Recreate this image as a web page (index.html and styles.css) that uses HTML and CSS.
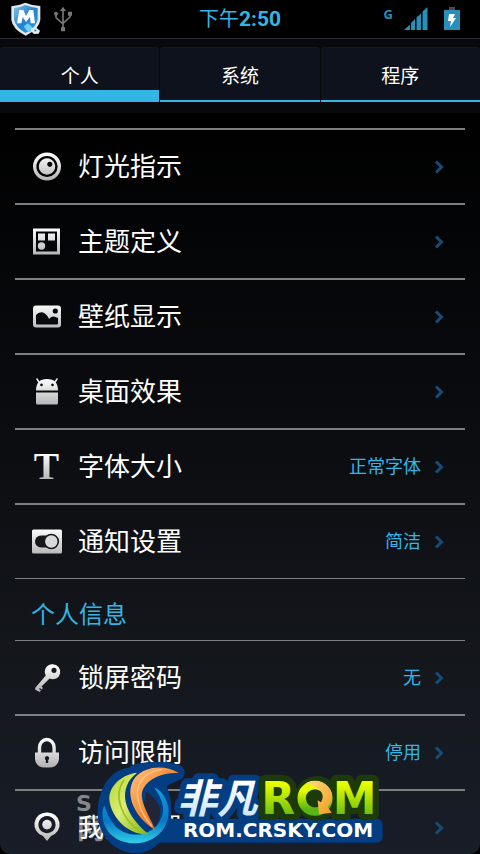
FILE: index.html
```html
<!DOCTYPE html>
<html lang="zh-CN">
<head>
<meta charset="utf-8">
<meta name="viewport" content="width=device-width, initial-scale=1">
<title>设置</title>
<link rel="stylesheet" href="styles.css">
</head>
<body>
<svg class="defs" width="0" height="0" aria-hidden="true">
  <defs>
    <linearGradient id="silver" gradientUnits="userSpaceOnUse" x1="0" y1="2" x2="0" y2="30">
      <stop offset="0" stop-color="#fff"/><stop offset="1" stop-color="#b2b2b4"/>
    </linearGradient>
    <symbol id="chevron" viewBox="0 0 10 14"><path d="M2 1.500L7.500 7L2 12.500" fill="none" stroke="#174c78" stroke-width="3"/></symbol>
  </defs>
</svg>
<div class="app">
  <header class="status">
    <div class="status-side">
      <svg width="30" height="34" viewBox="0 0 90 102">
        <defs><linearGradient id="shield" x1="0" y1="0" x2="1" y2="1"><stop offset="0" stop-color="#7cc4ee"/><stop offset=".5" stop-color="#2382cf"/><stop offset="1" stop-color="#2e9be0"/></linearGradient></defs>
        <path d="M1 13Q25 10 43 2Q64 11 88 12V54Q84 82 44 101Q5 82 1 54Z" fill="#e4e8ec"/>
        <path d="M9 18Q27 16 43 9Q62 16 80 18V53Q76 75 44 93Q13 75 9 53Z" fill="url(#shield)"/>
        <path d="M18 64L25 24H37L45 42L55 24H67L72 64H59L57 45L45 60L35 45L31 64Z" fill="#fff"/>
        <path d="M39 72L51 64L67 79L58 91Q44 88 39 72Z" fill="#72d0f5"/>
        <path d="M61 78L76 77L87 86L83 95L69 96L60 88Z" fill="#d8eef8"/>
        <path d="M70 83h6v5h-6z" fill="#4c7890"/>
      </svg>
      <svg width="18" height="26" viewBox="0 0 54 78">
        <g fill="none" stroke="#777" stroke-width="5"><path d="M27 8V66M6 25V35L27 54M48 25V33L27 52"/></g>
        <g fill="#777"><path d="M18 15L27 2L36 15Z"/><circle cx="6" cy="23" r="6"/><path d="M42 17h12v12h-12zM21 64h12v12h-12z"/></g>
      </svg>
    </div>
    <time class="clock" datetime="14:50">下午<b>2:50</b></time>
    <div class="status-side status-right">
      <span class="net">G</span>
      <svg width="24" height="24" viewBox="0 0 24 24"><path d="M0 23L6 17.500V23ZM7 16L11 12V23H7ZM12.500 10.500L17 6.500V23H12.500ZM18.500 4.500L23.500 0V23H18.500Z" fill="#288fb8"/></svg>
      <svg width="16" height="24" viewBox="0 0 16 24"><path d="M5 0h6v3h-6z" fill="#4a4a4a"/><path d="M0 3h16v20H0z" fill="#288fb8"/><path d="M5 7h6l-2 4h3l-6 9 1-6H4z" fill="#fff"/></svg>
    </div>
  </header>

  <nav class="tabs">
    <button class="tab tab-active" type="button">个人</button>
    <button class="tab" type="button">系统</button>
    <button class="tab" type="button">程序</button>
  </nav>

  <main class="panel">
    <div class="content">
      <ul class="list">
        <li><a class="row" href="#light">
          <svg class="icon" viewBox="0 0 32 32"><circle cx="16" cy="15.500" r="12.300" fill="none" stroke="url(#silver)" stroke-width="3.400"/><path fill="url(#silver)" fill-rule="evenodd" d="M16 7.300a8.200 8.200 0 1 0 .01 0ZM18.800 10.700a2.600 2.600 0 1 1-.01 0Z"/></svg>
          <span class="label">灯光指示</span><svg class="chev"><use href="#chevron"/></svg></a></li>
        <li><a class="row" href="#theme">
          <svg class="icon" viewBox="0 0 32 32"><path fill="url(#silver)" fill-rule="evenodd" d="M2 2.500H29V28.500H2ZM5 5.500V25.500H26V5.500Z"/><path fill="url(#silver)" d="M7 7.500h7v7H7zM17 7.500h7v7h-7z"/><circle cx="10.500" cy="20" r="3.700" fill="url(#silver)"/></svg>
          <span class="label">主题定义</span><svg class="chev"><use href="#chevron"/></svg></a></li>
        <li><a class="row" href="#wallpaper">
          <svg class="icon" viewBox="0 0 32 32"><rect x="2" y="4.500" width="28" height="22" rx="3" fill="url(#silver)"/><path fill="#08090d" d="M5 14Q8 10.500 12 11.500Q16 13 18 18Q20 15 23 15.500L27 17V22.500Q27 23.500 26 23.500H6Q5 23.500 5 22.500Z"/><circle cx="24.300" cy="10" r="2.600" fill="#08090d"/></svg>
          <span class="label">壁纸显示</span><svg class="chev"><use href="#chevron"/></svg></a></li>
        <li><a class="row" href="#desktop">
          <svg class="icon" viewBox="0 0 32 32"><path d="M8.500 7L6 3M23.500 7L26 3" stroke="#eee" stroke-width="1.500" stroke-linecap="round"/><path fill="url(#silver)" fill-rule="evenodd" d="M5 14.500Q5 3 16 3T27 14.500ZM10.500 7.500a1.400 1.400 0 1 0 .01 0ZM21.500 7.500a1.400 1.400 0 1 0 .01 0Z"/><path fill="url(#silver)" d="M5 16.500H27V27Q27 28.500 25.500 28.500H6.500Q5 28.500 5 27Z"/></svg>
          <span class="label">桌面效果</span><svg class="chev"><use href="#chevron"/></svg></a></li>
        <li><a class="row" href="#font">
          <svg class="icon" viewBox="0 0 32 32"><text class="type-t" x="15.500" y="28" text-anchor="middle" fill="url(#silver)">T</text></svg>
          <span class="label">字体大小</span><span class="value">正常字体</span><svg class="chev"><use href="#chevron"/></svg></a></li>
        <li><a class="row" href="#notify">
          <svg class="icon" viewBox="0 0 32 32"><rect x="1" y="3.500" width="30" height="24" rx="1.500" fill="url(#silver)"/><rect x="4" y="9.500" width="20" height="12" rx="6" fill="#16181c"/><circle cx="20.300" cy="15.500" r="7" fill="#d9d9da" stroke="#16181c" stroke-width="1.600"/></svg>
          <span class="label">通知设置</span><span class="value">简洁</span><svg class="chev"><use href="#chevron"/></svg></a></li>
      </ul>
      <h2 class="section">个人信息</h2>
      <ul class="list list-info">
        <li><a class="row" href="#lock">
          <svg class="icon" viewBox="0 0 32 32"><path fill="url(#silver)" fill-rule="evenodd" d="M21.700 2.300a7.500 7.500 0 1 1-3.100 14.300L10.500 24.500L12 26L10.500 27.500L9 26L8 27L10 28.500L8.500 30L4 27.500L4.500 25.500L14.800 13.500A7.500 7.500 0 0 1 21.700 2.300ZM23 5.800a2.600 2.600 0 1 0 .01 0Z"/></svg>
          <span class="label">锁屏密码</span><span class="value">无</span><svg class="chev"><use href="#chevron"/></svg></a></li>
        <li><a class="row" href="#access">
          <svg class="icon" viewBox="0 0 32 32"><path d="M8.500 17V10.500a7.300 8 0 0 1 14.600 0V17" fill="none" stroke="url(#silver)" stroke-width="3.400"/><path fill="url(#silver)" fill-rule="evenodd" d="M4 15.500H28V22Q27 30.500 18 30.500H14Q5 30.500 4 22ZM16 19a2.200 2.200 0 0 0-1.200 4V26h2.400V23a2.200 2.200 0 0 0-1.200-4Z"/></svg>
          <span class="label">访问限制</span><span class="value">停用</span><svg class="chev"><use href="#chevron"/></svg></a></li>
        <li><a class="row" href="#location">
          <svg class="icon" viewBox="0 0 32 32"><path fill="url(#silver)" fill-rule="evenodd" d="M16 .5A12 12 0 0 1 20 24L16 29L12 24A12 12 0 0 1 16 .5ZM16 4a8.600 8.600 0 1 0 .01 0Z"/><circle cx="16" cy="12.600" r="4.800" fill="url(#silver)"/></svg>
          <span class="label">我的位置</span><svg class="chev"><use href="#chevron"/></svg></a></li>
      </ul>
    </div>
  </main>

  <svg class="brand" viewBox="0 0 1020 372" role="img" aria-label="非凡ROM">
    <defs>
      <linearGradient id="lime" x1="0" y1="0" x2="0" y2="1"><stop offset=".2" stop-color="#e8ff00"/><stop offset=".9" stop-color="#58b514"/></linearGradient>
      <linearGradient id="ice" x1="0" y1="0" x2="0" y2="1"><stop offset=".3" stop-color="#fff"/><stop offset="1" stop-color="#b9def5"/></linearGradient>
      <linearGradient id="leaf" x1="0" y1="0" x2="1" y2="1"><stop offset="0" stop-color="#b4d62b"/><stop offset=".45" stop-color="#dcec76"/><stop offset="1" stop-color="#83b30c"/></linearGradient>
      <linearGradient id="flame" x1="0" y1="0" x2="1" y2="1"><stop offset="0" stop-color="#ffc37c"/><stop offset=".5" stop-color="#f58a36"/><stop offset="1" stop-color="#dc5a12"/></linearGradient>
      <linearGradient id="sea" x1="0" y1="0" x2="0" y2="1"><stop offset="0" stop-color="#0d9fe2"/><stop offset=".6" stop-color="#0877c4"/><stop offset="1" stop-color="#2fd0ea"/></linearGradient>
      <linearGradient id="gold" x1="0" y1="0" x2="1" y2="1"><stop offset="0" stop-color="#ffdc82"/><stop offset="1" stop-color="#f19b20"/></linearGradient>
    </defs>
    <rect x="270" y="266" width="698" height="72" rx="18" fill="#033d82"/>
    <text class="cn" x="352" y="250" fill="#033d82" stroke="#033d82" stroke-width="36">非凡</text>
    <path fill="#033d82" d="M113 250C113 185 145 120 205 113C240 90 330 90 365 108Q382 124 368 145L320 168Q336 205 334 245C332 320 285 370 225 370C170 370 113 320 113 250Z"/>
    <path fill="url(#sea)" d="M133 226C115 262 137 340 225 340C305 340 345 265 317 208Q304 180 282 172Q320 225 305 260C282 325 200 328 164 286Q142 258 133 226Z"/>
    <path fill="#202638" d="M258 186Q288 200 300 236Q303 262 288 290L250 240Z"/>
    <path fill="url(#leaf)" d="M231 128C190 132 147 164 148 208C151 257 202 318 266 313C224 280 197 238 195 202C194 165 211 145 231 128Z"/>
    <path fill="none" stroke="#9cc421" stroke-width="5" d="M192 150C160 192 180 265 245 309"/>
    <path fill="url(#flame)" d="M356 129C313 103 256 108 226 142C195 179 211 254 286 300C263 247 233 205 251 174C267 144 313 126 356 129Z"/>
    <path d="M305 119C250 126 220 164 237 219Q246 255 276 289" fill="none" stroke="#ffc58c" stroke-width="4"/>
    <g class="rom">
      <g fill="#1d3b0a" stroke="#1d3b0a" stroke-width="38"><text x="604" y="253">R</text><circle cx="771" cy="205" r="48"/><text x="818" y="253">M</text></g>
      <text x="604" y="253" fill="url(#lime)">R</text>
      <text x="818" y="253" fill="url(#lime)">M</text>
      <circle cx="765" cy="205" r="40" fill="none" stroke="url(#lime)" stroke-width="25"/>
      <path d="M737 160C790 134 840 188 803 230L815 248L777 253L773 211L783 217C799 191 778 171 737 160Z" fill="url(#gold)"/>
    </g>
    <text class="cn" x="352" y="250" fill="url(#ice)">非凡</text>
    <text class="site" x="654" y="322" text-anchor="middle">ROM.CRSKY.COM</text>
  </svg>
  <svg class="watermark" viewBox="0 0 110 50" aria-hidden="true"><text class="wm-big" x="0" y="16">S</text><text class="wm-small" x="1" y="44">网</text></svg>
</div>
</body>
</html>
```
FILE: styles.css
```css
* { box-sizing: border-box; }
body {
  margin: 0;
  background: #000;
  color: #fff;
  font-family: Roboto, "Noto Sans CJK SC", sans-serif;
}
.defs { position: absolute; }
.app {
  position: relative;
  display: flex;
  flex-direction: column;
  height: 100vh;
  overflow: hidden;
}
.status {
  display: grid;
  grid-template-columns: 1fr auto 1fr;
  align-items: center;
  height: 39px;
  flex: none;
  padding: 0 11px;
  border-bottom: 1px solid #2a2e34;
}
.status-side { display: flex; align-items: center; gap: 13px; }
.status-right { justify-content: flex-end; gap: 16px; padding-right: 9px; }
.net {
  align-self: flex-start;
  margin-right: -5px;
  color: #288fb8;
  font: bold 13px/14px "Open Sans", sans-serif;
}
.clock { color: #33b5e5; font-size: 20px; line-height: 38px; }
.clock b { font-size: 21px; }
.tabs {
  display: grid;
  grid-template-columns: repeat(3, 1fr);
  flex: none;
  gap: 1px;
  height: 74px;
  padding: 8px 0 11px;
  background: #07090d;
}
.tab {
  margin: 0;
  padding: 5px 0 0;
  border: 0;
  border-top: 1px solid #15181f;
  border-bottom: 2px solid #33b5e5;
  border-radius: 3px 3px 0 0;
  background: #0e121c;
  color: #fff;
  font: 19px/28px Roboto, "Noto Sans CJK SC", sans-serif;
}
.tab-active { box-shadow: inset 0 -10px #33b5e5; }
.panel {
  flex: 1;
  min-height: 0;
  overflow: hidden;
  padding: 15px 15px 0;
  border-radius: 0 0 10px 10px;
  background: linear-gradient(#000, #0b0d11 45%, #14171c 75%, #181d28);
}
.content { position: relative; z-index: 2; }
.list { margin: 0; padding: 0; list-style: none; }
.list li { border-top: 2px solid #7d7f81; }
.list-info li:first-child { border-top-width: 1px; }
.row {
  display: flex;
  align-items: center;
  height: 73px;
  padding: 0 21px 0 16px;
  color: #fff;
  text-decoration: none;
}
.icon { flex: none; width: 32px; height: 32px; margin-right: 15px; overflow: visible; }
.type-t { font: bold 38px "Liberation Serif", serif; }
.label { flex: 1; font-size: 26px; line-height: 36px; }
.value { color: #33b5e5; font-size: 18px; line-height: 24px; }
.chev { flex: none; width: 10px; height: 14px; margin-left: 13px; }
.section {
  margin: 0;
  padding: 11px 16px 0;
  border-top: 1px solid #7d7f81;
  color: #33b5e5;
  font-size: 24px;
  font-weight: 400;
  line-height: 50px;
}
.brand {
  position: absolute;
  z-index: 3;
  left: 60px;
  bottom: 0;
  width: 340px;
}
.brand text { stroke-linejoin: round; }
.cn { font: italic bold 120px "Noto Sans CJK SC", sans-serif; }
.rom { font: bold 132px "DejaVu Sans", sans-serif; stroke-linejoin: round; }
.site { fill: #fff; font: bold 60px "DejaVu Sans", sans-serif; }
.watermark {
  position: absolute;
  z-index: 1;
  left: 76px;
  bottom: 9px;
  width: 110px;
  height: 50px;
  overflow: visible;
  fill: #85878a;
}
.wm-big { font: bold 22px "DejaVu Sans", sans-serif; }
.wm-small { font: bold 28px "Noto Sans CJK SC", sans-serif; }
```
